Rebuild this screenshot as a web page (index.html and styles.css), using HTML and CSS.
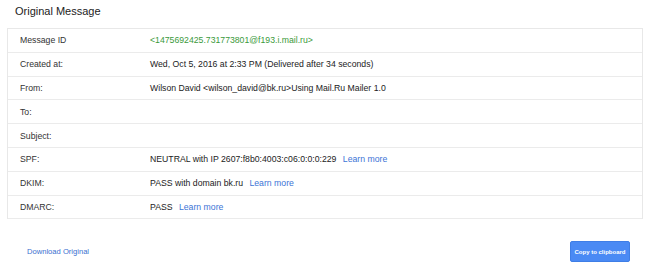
FILE: index.html
```html
<!DOCTYPE html>
<html lang="en">
<head>
  <meta charset="UTF-8">
  <meta name="viewport" content="width=device-width, initial-scale=1.0">
  <title>Original Message</title>
  <link rel="stylesheet" href="styles.css">
</head>
<body>
  <div class="page">
    <h1 class="title">Original Message</h1>

    <!-- Header summary -->
    <div class="details">
      <div class="row">
        <div class="label">Message ID</div>
        <div class="value msgid">&lt;1475692425.731773801@f193.i.mail.ru&gt;</div>
      </div>
      <div class="row">
        <div class="label">Created at:</div>
        <div class="value">Wed, Oct 5, 2016 at 2:33 PM (Delivered after 34 seconds)</div>
      </div>
      <div class="row">
        <div class="label">From:</div>
        <div class="value">Wilson David &lt;wilson_david@bk.ru&gt;Using Mail.Ru Mailer 1.0</div>
      </div>
      <div class="row">
        <div class="label">To:</div>
        <div class="value"></div>
      </div>
      <div class="row">
        <div class="label">Subject:</div>
        <div class="value"></div>
      </div>
      <div class="row">
        <div class="label">SPF:</div>
        <div class="value">NEUTRAL with IP 2607:f8b0:4003:c06:0:0:0:229 <a href="#" class="learn">Learn more</a></div>
      </div>
      <div class="row">
        <div class="label">DKIM:</div>
        <div class="value">PASS with domain bk.ru <a href="#" class="learn">Learn more</a></div>
      </div>
      <div class="row">
        <div class="label">DMARC:</div>
        <div class="value">PASS <a href="#" class="learn">Learn more</a></div>
      </div>
    </div>

    <div class="footer">
      <a href="#" class="download">Download Original</a>
      <button class="copy">Copy to clipboard</button>
    </div>
  </div>
</body>
</html>
```

FILE: styles.css
```css
body {
  margin: 0;
  background: #fff;
  font-family: 'Liberation Sans', Arial, sans-serif;
  color: #222;
}
.page {
  padding: 0 7px;
}
.title {
  margin: 0;
  padding: 5px 0 0 8px;
  height: 28px;
  box-sizing: border-box;
  font-size: 11px;
  font-weight: normal;
  color: #222;
}
.details {
  border: 1px solid #e8e8e8;
  border-bottom: none;
}
.row {
  display: flex;
  align-items: center;
  height: 23.8px;
  box-sizing: border-box;
  border-bottom: 1px solid #ebebeb;
  font-size: 8.7px;
  color: #333;
}
.label {
  width: 142px;
  padding-left: 12px;
  box-sizing: border-box;
  flex-shrink: 0;
}
.value {
  color: #222;
}
.msgid {
  color: #3b9a3b;
}
.learn {
  margin-left: 4px;
  color: #3b74d6;
  text-decoration: none;
}
.footer {
  display: flex;
  align-items: center;
  justify-content: space-between;
  padding: 22px 13px 0 20px;
}
.download {
  font-size: 7.6px;
  color: #3b6fd0;
  text-decoration: none;
}
.copy {
  width: 60px;
  height: 21px;
  padding: 0;
  background: #4a8af4;
  border: 1px solid #3f7ee6;
  border-radius: 2px;
  color: #fff;
  font-family: 'Liberation Sans', Arial, sans-serif;
  font-size: 6px;
  font-weight: bold;
}
```
